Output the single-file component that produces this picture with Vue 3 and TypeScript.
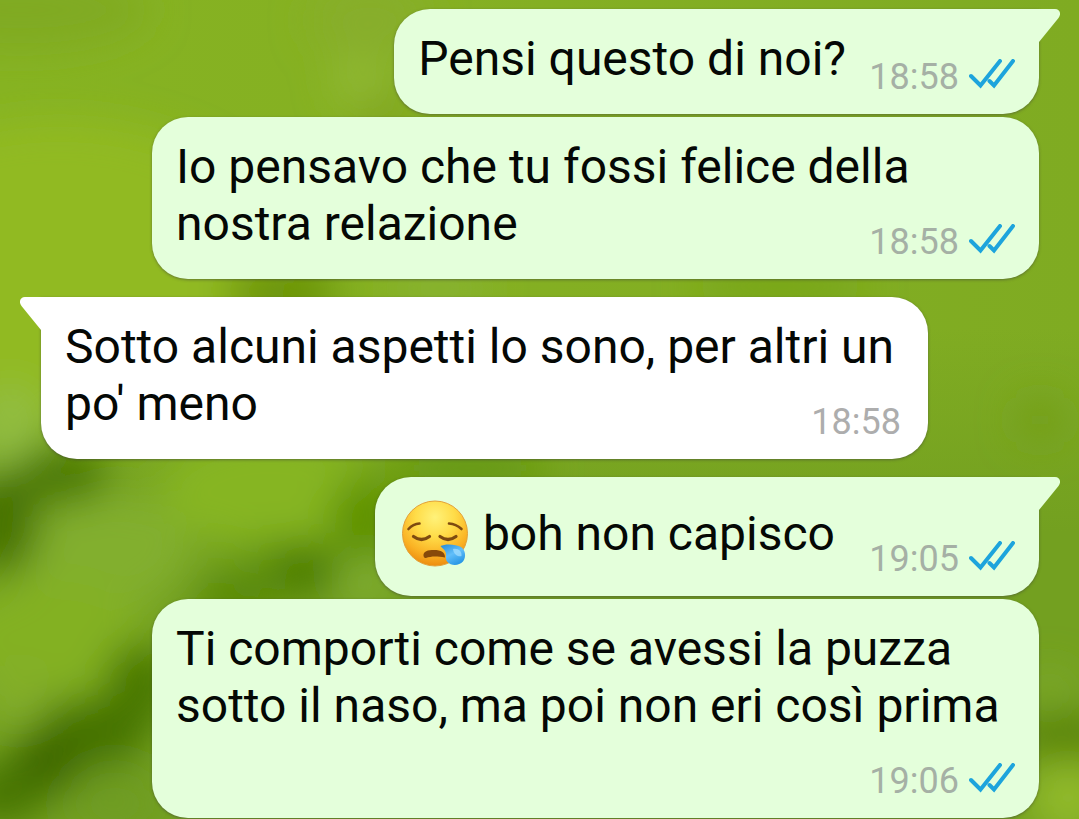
<script setup lang="ts">
interface Message {
  id: number
  text: string
  time: string
  outgoing: boolean
  first: boolean
  sleepy?: boolean
}

interface Blob {
  x: number
  y: number
  rx: number
  ry: number
  fill: string
}

const messages: Message[] = [
  { id: 1, text: 'Pensi questo di noi?', time: '18:58', outgoing: true, first: true },
  { id: 2, text: 'Io pensavo che tu fossi felice della nostra relazione', time: '18:58', outgoing: true, first: false },
  { id: 3, text: "Sotto alcuni aspetti lo sono, per altri un po' meno", time: '18:58', outgoing: false, first: true },
  { id: 4, text: 'boh non capisco', time: '19:05', outgoing: true, first: true, sleepy: true },
  { id: 5, text: 'Ti comporti come se avessi la puzza sotto il naso, ma poi non eri così prima', time: '19:06', outgoing: true, first: false },
]

// Out-of-focus foliage, painted back to front
const blobs: Blob[] = [
  { x: 60, y: 270, rx: 230, ry: 150, fill: '#91ba24' },
  { x: 20, y: 10, rx: 130, ry: 40, fill: '#80aa22' },
  { x: 370, y: 20, rx: 60, ry: 40, fill: '#87ae2a' },
  { x: 360, y: 82, rx: 28, ry: 24, fill: '#91ba34' },
  { x: 385, y: 112, rx: 34, ry: 16, fill: '#7fa31e' },
  { x: 280, y: 290, rx: 58, ry: 22, fill: '#648c06' },
  { x: 440, y: 288, rx: 50, ry: 16, fill: '#88b434' },
  { x: 780, y: 286, rx: 90, ry: 16, fill: '#76a414' },
  { x: 1040, y: 420, rx: 24, ry: 24, fill: '#739f1e' },
  { x: 10, y: 430, rx: 34, ry: 46, fill: '#92bd42' },
  { x: 270, y: 490, rx: 110, ry: 60, fill: '#86b524' },
  { x: 100, y: 550, rx: 90, ry: 60, fill: '#82af2e' },
  { x: 50, y: 640, rx: 100, ry: 60, fill: '#83b124' },
  { x: 20, y: 695, rx: 40, ry: 30, fill: '#83ae2c' },
  { x: 60, y: 476, rx: 50, ry: 30, fill: '#4b7900' },
  { x: 2, y: 522, rx: 38, ry: 52, fill: '#467200' },
  { x: 470, y: 468, rx: 80, ry: 18, fill: '#629608' },
  { x: 365, y: 520, rx: 36, ry: 44, fill: '#5e9206' },
  { x: 280, y: 568, rx: 60, ry: 28, fill: '#659515' },
  { x: 304, y: 568, rx: 32, ry: 28, fill: '#4a7a00' },
  { x: 235, y: 600, rx: 46, ry: 18, fill: '#528400' },
  { x: 365, y: 582, rx: 22, ry: 24, fill: '#83b135' },
  { x: 140, y: 685, rx: 36, ry: 44, fill: '#4a7800' },
  { x: 90, y: 735, rx: 56, ry: 38, fill: '#447200' },
  { x: 45, y: 765, rx: 38, ry: 32, fill: '#3c6600' },
  { x: 2, y: 795, rx: 44, ry: 30, fill: '#467400' },
  { x: 115, y: 804, rx: 50, ry: 40, fill: '#6f9d24' },
  { x: 1050, y: 695, rx: 26, ry: 26, fill: '#7ba82a' },
  { x: 1065, y: 735, rx: 56, ry: 24, fill: '#588306' },
  { x: 1068, y: 798, rx: 40, ry: 38, fill: '#91ba29' },
]
</script>

<template>
  <main class="chat">
    <svg class="wallpaper" viewBox="0 0 1079 819" preserveAspectRatio="none" aria-hidden="true">
      <defs>
        <linearGradient id="base" x1="0" y1="0" x2="1" y2="0">
          <stop offset="0" stop-color="#86b322" />
          <stop offset="0.4" stop-color="#85b022" />
          <stop offset="1" stop-color="#7fab22" />
        </linearGradient>
        <linearGradient id="shade" x1="0" y1="0" x2="0" y2="1">
          <stop offset="0.4" stop-color="#73a020" stop-opacity="0" />
          <stop offset="0.65" stop-color="#73a020" />
        </linearGradient>
        <filter id="soft" x="-50%" y="-50%" width="200%" height="200%">
          <feGaussianBlur stdDeviation="19" />
        </filter>
      </defs>
      <rect width="1079" height="819" fill="url(#base)" />
      <rect width="1079" height="819" fill="url(#shade)" />
      <g filter="url(#soft)">
        <ellipse v-for="(b, i) in blobs" :key="i" :cx="b.x" :cy="b.y" :rx="b.rx" :ry="b.ry" :fill="b.fill" />
      </g>
    </svg>

    <article
      v-for="m in messages"
      :key="m.id"
      class="bubble"
      :class="{ outgoing: m.outgoing, incoming: !m.outgoing, first: m.first, sleepy: m.sleepy }"
    >
      <svg v-if="m.first" class="tail" viewBox="0 0 21 34" aria-hidden="true">
        <path d="M0 0H16C21 0 22.500 5 19.500 9L0 33Z" />
      </svg>
      <p class="text">
        <svg v-if="m.sleepy" class="emoji" viewBox="0 0 72 71" role="img" aria-label="😪">
          <defs>
            <radialGradient id="face" cx="0.5" cy="0.25" r="0.76">
              <stop offset="0" stop-color="#fff27a" />
              <stop offset="0.4" stop-color="#ffdc48" />
              <stop offset="0.75" stop-color="#fab224" />
              <stop offset="1" stop-color="#ec8a0e" />
            </radialGradient>
            <linearGradient id="drop" x1="0" y1="0" x2="0.6" y2="1">
              <stop offset="0" stop-color="#2489d6" />
              <stop offset="0.55" stop-color="#62bffa" />
              <stop offset="1" stop-color="#2b98e6" />
            </linearGradient>
          </defs>
          <circle cx="36" cy="35.500" r="32.500" fill="url(#face)" stroke="#e3a13a" stroke-width="1" />
          <g fill="none" stroke="#7d4a10" stroke-linecap="round">
            <path d="M9.500 31Q14 26 20.500 25.500" stroke-width="2.600" />
            <path d="M50 25.500Q57 26 62.500 31" stroke-width="2.600" />
            <path d="M14.500 38.500Q22.500 44.500 30.500 38.500" stroke-width="3.200" />
            <path d="M41 38.500Q49 44.500 57 38.500" stroke-width="3.200" />
          </g>
          <path d="M24.500 58C24 53 29 52 35 52C42 52 46 54 46 59.500C38 58 32 58 27 60Q25 60.500 24.500 58Z" fill="#87490a" />
          <path d="M41.500 48C46 45.500 57 46 62 49C66.500 52 67.500 59 64 63.500C60 68 52 68 48.500 64C45.500 60.500 48 57 46.500 54C45.500 51.500 43.500 50.500 41.500 48Z" fill="url(#drop)" />
          <path d="M54 51C59 50 63 53 62.500 58C59 59.500 54.500 56 54 51Z" fill="#a6e0ff" opacity="0.700" />
        </svg>
        {{ m.text }}<span class="reserve" aria-hidden="true"></span>
      </p>
      <footer class="meta">
        <time>{{ m.time }}</time>
        <svg v-if="m.outgoing" class="ticks" viewBox="0 0 46 31" role="img" aria-label="Letto">
          <path d="M2 17L11.500 26.500L31 2M20.500 22L25 26.500L44 2" />
        </svg>
      </footer>
    </article>
  </main>
</template>

<style>
body {
  margin: 0;
  background: #78a422;
}
</style>

<style scoped>
.chat {
  position: relative;
  box-sizing: border-box;
  min-height: 100vh;
  padding: 9px 40px 1px 41px;
  display: flex;
  flex-direction: column;
  gap: 3px;
  overflow: hidden;
  font-family: Roboto, "Liberation Sans", sans-serif;
}

.wallpaper {
  position: absolute;
  inset: 0;
  width: 100%;
  height: 100%;
}

.bubble {
  position: relative;
  box-sizing: border-box;
  max-width: calc(100% - 111px);
  padding: 21px 24px 27px;
  border-radius: 36px;
  box-shadow: 0 1px 3px rgba(60, 60, 60, 0.5);
}

.outgoing {
  align-self: flex-end;
  background: #e4ffdb;
  color: #e4ffdb;
}

.incoming {
  align-self: flex-start;
  background: #fff;
  color: #fff;
}

.first:not(:nth-child(2)) {
  margin-top: 15px;
}

.outgoing.first {
  border-top-right-radius: 0;
}

.incoming.first {
  border-top-left-radius: 0;
}

.tail {
  position: absolute;
  top: 0;
  width: 21px;
  height: 34px;
  fill: currentColor;
}

.outgoing .tail {
  left: 100%;
}

.incoming .tail {
  right: 100%;
  transform: scaleX(-1);
}

.text {
  margin: 0;
  font-size: 48px;
  line-height: 57px;
  color: #050805;
}

.emoji {
  width: 72px;
  height: 71px;
  vertical-align: -19px;
}

.reserve {
  display: inline-block;
  width: 169px;
  height: 1px;
}

.incoming .reserve {
  width: 112px;
}

.sleepy .reserve {
  width: 180px;
}

.meta {
  position: absolute;
  right: 24px;
  bottom: 16px;
  display: flex;
  align-items: center;
  gap: 10px;
  font-size: 36px;
  line-height: 42px;
  color: #a5b0a5;
}

.incoming .meta {
  right: 27px;
  color: #adadad;
}

.ticks {
  width: 46px;
  height: 31px;
  margin-bottom: 6px;
  fill: none;
  stroke: #1da4dc;
  stroke-width: 4;
  stroke-linecap: round;
}
</style>
